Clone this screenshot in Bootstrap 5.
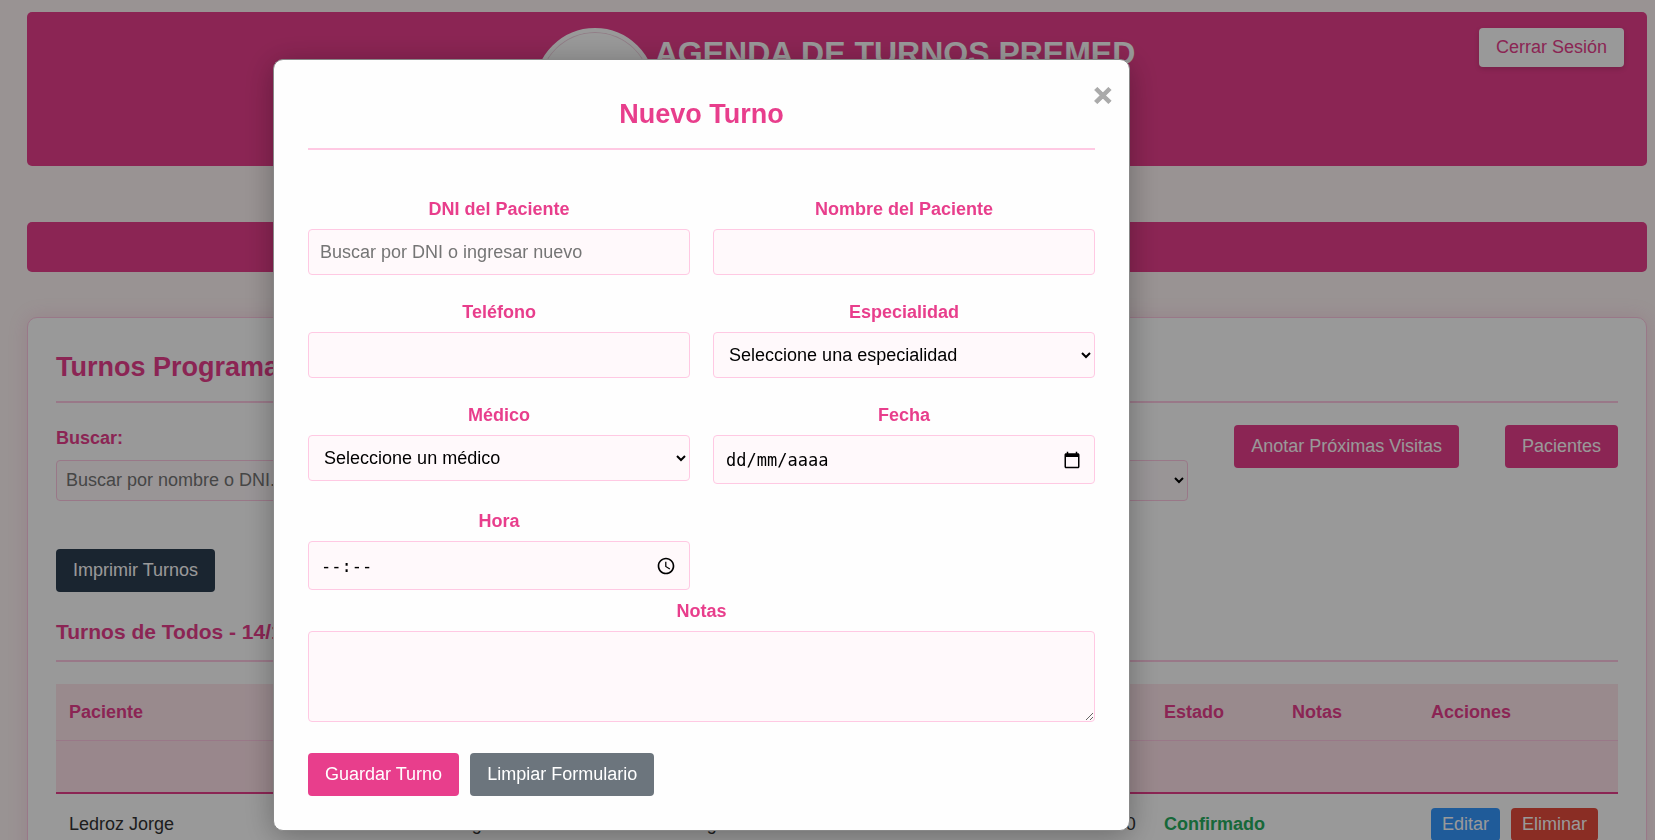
<!DOCTYPE html>
<html lang="es">
<head>
<meta charset="utf-8">
<meta name="viewport" content="width=device-width, initial-scale=1">
<title>Agenda de Turnos Premed</title>
<link href="https://cdn.jsdelivr.net/npm/bootstrap@5.3.0/dist/css/bootstrap.min.css" rel="stylesheet">
<style>
  :root { --pink: #e83e8c; --pink-line: #ffc9e3; --field: #fff9fb; }
  body { background: #fff5f5; color: #333; font-family: "Liberation Sans", Arial, sans-serif; font-size: 18px; line-height: 27px; overflow: hidden; height: 100vh; }
  .page { padding: 12px 8px 0 27px; height: 100vh; overflow: hidden; }
  .top-bar, .menu-bar { background: var(--pink); border-radius: 5px; }
  .top-bar { display: grid; grid-template-columns: 1fr auto 1fr; align-items: start; padding: 16px 23px 18px; margin-bottom: 56px; }
  .top-bar h1 { font-size: 32px; line-height: 38px; font-weight: 700; padding-top: 6px; }
  .logo { width: 120px; height: 120px; border: 4px solid #fff; border-radius: 50%; background: #fff; box-shadow: inset 0 0 0 1px #f3d3e2; }
  .menu-bar { height: 50px; margin-bottom: 45px; }
  .act { --bs-btn-font-size: 18px; --bs-btn-line-height: 19px; --bs-btn-padding-x: 16px; --bs-btn-padding-y: 11px; --bs-btn-border-radius: 4px; --bs-btn-color: #fff; --bs-btn-hover-color: #fff; white-space: nowrap; }
  .act-pink { --bs-btn-bg: #e83e8c; --bs-btn-hover-bg: #d63384; }
  .act-dark { --bs-btn-bg: #2c3e50; --bs-btn-hover-bg: #1f2d3a; }
  .act-gray { --bs-btn-bg: #6c757d; --bs-btn-hover-bg: #5c636a; }
  .act-exit { --bs-btn-bg: #fff; --bs-btn-color: #e83e8c; --bs-btn-hover-color: #e83e8c; --bs-btn-padding-y: 9px; box-shadow: 0 2px 5px rgba(0,0,0,.15); }
  .act-row { --bs-btn-padding-x: 10px; --bs-btn-padding-y: 6px; }
  .act-edit { --bs-btn-bg: #3498ff; --bs-btn-hover-bg: #2980d9; }
  .act-del { --bs-btn-bg: #e74c3c; --bs-btn-hover-bg: #c0392b; }
  .btn-gap { gap: 11px; }
  .panel { background: #fff; border: 1px solid var(--pink-line); border-radius: 10px; padding: 29px 28px; box-shadow: 0 0 20px rgba(232,62,140,.15); }
  .section-title { color: var(--pink); font-size: 27px; line-height: 41px; font-weight: 700; border-bottom: 2px solid var(--pink-line); padding-bottom: 13px; margin-bottom: 22px; }
  .sub-title { color: var(--pink); font-size: 21px; line-height: 32px; font-weight: 700; border-bottom: 2px solid var(--pink-line); padding-bottom: 12px; margin: 24px 0 22px; }
  .field-label { color: var(--pink); font-weight: 700; display: block; margin-bottom: 6px; }
  .field { display: block; width: 100%; height: 46px; padding: 0 11px; border: 1px solid var(--pink-line); border-radius: 4px; background: var(--field); color: #000; font-size: 18px; line-height: 22px; }
  .field::placeholder { color: #757575; }
  .field-icon { display: flex; align-items: center; height: 49px; padding: 0 13px 0 12px; }
  .field-icon input { flex: 1; min-width: 0; border: 0; padding: 0; background: none; outline: 0; font-family: "DejaVu Sans Mono", monospace; font-size: 17px; color: #000; }
  .field-icon input::placeholder { color: #000; opacity: 1; }
  textarea.field { height: 91px; }
  .filters { display: grid; grid-template-columns: 1fr 1fr auto auto; column-gap: 46px; align-items: start; margin-bottom: 48px; }
  .filters .field-label { margin-bottom: 8px; }
  .filters .field { height: 41px; padding: 0 9px; }
  .turnos { table-layout: fixed; width: 100%; }
  .turnos th, .turnos td { padding: 14px 13px; vertical-align: middle; white-space: nowrap; }
  .turnos thead tr { background: #ffe6ec; color: var(--pink); }
  .turnos thead th { height: 56px; padding: 15px 13px 13px; border-bottom: 1px solid var(--pink-line); }
  .turnos .blank-row td { background: #ffe2e9; height: 53px; padding: 0; border-bottom: 2px solid var(--pink); }
  .turnos .state-ok { color: #27ae60; font-weight: 700; }
  .overlay { background: rgba(0,0,0,.4); }
  .dialog-box { max-width: 857px; margin: 59px auto 0 16.5%; }
  .dialog-body { border: 1px solid #888; border-radius: 10px; background: #fefefe; padding: 34px; box-shadow: 0 5px 30px rgba(0,0,0,.3); color: #333; }
  .dialog-title { margin-bottom: 46px; }
  .form-grid { display: grid; grid-template-columns: 1fr 1fr; gap: 24px 23px; align-items: start; text-align: center; }
  .notes { margin: 8px 0 31px; text-align: center; }
  .close-x { position: absolute; top: 15px; right: 17px; border: 0; padding: 0; background: none; color: #aaa; font-size: 32px; line-height: 40px; font-weight: 700; -webkit-text-stroke: 1px #aaa; }
</style>
</head>
<body>
<div class="page">
  <header class="top-bar">
    <span></span>
    <div class="d-flex pe-1">
      <div class="logo"></div>
      <h1 class="text-white text-nowrap mb-0">AGENDA DE TURNOS PREMED</h1>
    </div>
    <button type="button" class="btn act act-exit ms-auto">Cerrar Sesión</button>
  </header>
  <nav class="menu-bar"></nav>

  <main class="panel">
    <h2 class="section-title">Turnos Programados</h2>
    <div class="filters">
      <div>
        <label class="field-label" for="buscar">Buscar:</label>
        <input class="field" id="buscar" type="text" placeholder="Buscar por nombre o DNI...">
      </div>
      <div>
        <label class="field-label" for="filtro">Médico:</label>
        <select class="field" id="filtro"><option>Todos</option></select>
      </div>
      <button type="button" class="btn act act-pink">Anotar Próximas Visitas</button>
      <button type="button" class="btn act act-pink">Pacientes</button>
    </div>
    <button type="button" class="btn act act-dark">Imprimir Turnos</button>
    <h3 class="sub-title">Turnos de Todos - 14/12/2024</h3>
    <table class="turnos">
      <colgroup>
        <col style="width:21.5%"><col style="width:17.6%"><col style="width:14.4%"><col style="width:12%"><col style="width:4.6%"><col style="width:8.2%"><col style="width:8.9%"><col style="width:12.8%">
      </colgroup>
      <thead>
        <tr><th>Paciente</th><th>Especialidad</th><th>Médico</th><th>Fecha</th><th>Hs.</th><th>Estado</th><th>Notas</th><th>Acciones</th></tr>
      </thead>
      <tbody>
        <tr class="blank-row"><td colspan="8"></td></tr>
        <tr>
          <td>Ledroz Jorge</td><td>Cardiología</td><td>Diego Ramos</td><td>14/12/2024</td><td>11:00</td>
          <td class="state-ok">Confirmado</td><td></td>
          <td><div class="d-flex btn-gap"><button type="button" class="btn act act-row act-edit">Editar</button><button type="button" class="btn act act-row act-del">Eliminar</button></div></td>
        </tr>
      </tbody>
    </table>
  </main>
</div>

<div class="modal d-block overlay overflow-hidden" role="dialog" aria-modal="true" aria-labelledby="dlgTitle">
  <div class="modal-dialog dialog-box">
    <div class="modal-content dialog-body">
      <button type="button" class="close-x" aria-label="Cerrar">×</button>
      <h2 class="section-title dialog-title text-center" id="dlgTitle">Nuevo Turno</h2>
      <form>
        <div class="form-grid">
          <div><label class="field-label" for="dni">DNI del Paciente</label><input class="field" id="dni" type="text" placeholder="Buscar por DNI o ingresar nuevo"></div>
          <div><label class="field-label" for="nombre">Nombre del Paciente</label><input class="field" id="nombre" type="text"></div>
          <div><label class="field-label" for="tel">Teléfono</label><input class="field" id="tel" type="tel"></div>
          <div><label class="field-label" for="esp">Especialidad</label><select class="field" id="esp"><option>Seleccione una especialidad</option></select></div>
          <div><label class="field-label" for="medico">Médico</label><select class="field" id="medico"><option>Seleccione un médico</option></select></div>
          <div>
            <label class="field-label" for="fecha">Fecha</label>
            <div class="field field-icon"><input id="fecha" type="text" placeholder="dd/mm/aaaa">
              <svg width="18" height="18" viewBox="0 0 24 24" aria-hidden="true"><path d="M20 3h-1V1h-2v2H7V1H5v2H4c-1.1 0-2 .9-2 2v16c0 1.1.9 2 2 2h16c1.1 0 2-.9 2-2V5c0-1.1-.9-2-2-2zm0 18H4V8h16v13z"/></svg></div>
          </div>
          <div>
            <label class="field-label" for="hora">Hora</label>
            <div class="field field-icon"><input id="hora" type="text" placeholder="--:--">
              <svg width="20" height="20" viewBox="0 0 24 24" aria-hidden="true"><path d="M11.99 2C6.47 2 2 6.48 2 12s4.47 10 9.99 10C17.52 22 22 17.52 22 12S17.52 2 11.99 2zM12 20c-4.42 0-8-3.58-8-8s3.58-8 8-8 8 3.58 8 8-3.58 8-8 8z"/><path d="M12.5 7H11v6l5.25 3.15.75-1.23-4.5-2.67z"/></svg></div>
          </div>
        </div>
        <div class="notes">
          <label class="field-label" for="notas">Notas</label>
          <textarea class="field" id="notas"></textarea>
        </div>
        <div class="d-flex btn-gap">
          <button type="submit" class="btn act act-pink">Guardar Turno</button>
          <button type="reset" class="btn act act-gray">Limpiar Formulario</button>
        </div>
      </form>
    </div>
  </div>
</div>
<script src="https://cdn.jsdelivr.net/npm/bootstrap@5.3.0/dist/js/bootstrap.bundle.min.js"></script>
</body>
</html>
